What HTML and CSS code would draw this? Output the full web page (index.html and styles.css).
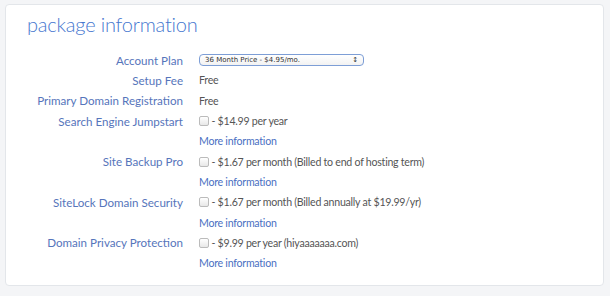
FILE: index.html
```html
<!DOCTYPE html>
<html>
<head>
    <meta charset="UTF-8">
    <title>package information</title>
    <link rel="stylesheet" href="styles.css">
</head>
<body>
<div class="panel">
    <h1>package information</h1>

    <div class="rows">
        <div class="label">Account Plan</div>
        <div class="value">
            <div class="select">
                <span>36 Month Price - $4.95/mo.</span>
                <span class="arrows">&#8597;</span>
            </div>
        </div>

        <div class="label">Setup Fee</div>
        <div class="value">Free</div>

        <div class="label">Primary Domain Registration</div>
        <div class="value">Free</div>

        <div class="label">Search Engine Jumpstart</div>
        <div class="value"><span class="box"></span> - $14.99 per year</div>
        <div class="label"></div>
        <div class="value"><a href="#">More information</a></div>

        <div class="label">Site Backup Pro</div>
        <div class="value"><span class="box"></span> - $1.67 per month (Billed to end of hosting term)</div>
        <div class="label"></div>
        <div class="value"><a href="#">More information</a></div>

        <div class="label">SiteLock Domain Security</div>
        <div class="value"><span class="box"></span> - $1.67 per month (Billed annually at $19.99/yr)</div>
        <div class="label"></div>
        <div class="value"><a href="#">More information</a></div>

        <div class="label">Domain Privacy Protection</div>
        <div class="value"><span class="box"></span> - $9.99 per year (hiyaaaaaaa.com)</div>
        <div class="label"></div>
        <div class="value"><a href="#">More information</a></div>
    </div>
</div>
</body>
</html>
```

FILE: styles.css
```css
body {
    margin: 0;
    padding: 4px 6px 9px 5px;
    background: #f4f5f7;
    font-family: Lato, "Open Sans", sans-serif;
    font-size: 12px;
}

.panel {
    background: #fff;
    border: 1px solid #e3e6ea;
    border-radius: 4px;
    height: 282px;
    box-sizing: border-box;
    padding: 7px 0 0 21px;
}

h1 {
    margin: 0 0 14px 0;
    font-weight: 300;
    font-size: 20px;
    line-height: 24px;
    letter-spacing: -0.2px;
    color: #4677cf;
}

.rows {
    display: grid;
    grid-template-columns: 156px auto;
    column-gap: 16px;
    grid-auto-rows: 20.3px;
    align-items: center;
}

.label {
    text-align: right;
    white-space: nowrap;
    color: #5675bb;
    font-size: 11.6px;
}

.value {
    color: #555;
    font-size: 10.6px;
    letter-spacing: -0.25px;
    white-space: nowrap;
}

.value a {
    color: #4a6fc2;
    text-decoration: none;
}

.select {
    width: 165px;
    height: 12px;
    box-sizing: border-box;
    border: 1px solid #7d9ed6;
    border-radius: 4px;
    display: flex;
    justify-content: space-between;
    align-items: center;
    padding: 0 5px;
    font-family: "DejaVu Sans", sans-serif;
    font-size: 7px;
    letter-spacing: 0;
    color: #333;
    background: linear-gradient(#fff, #f2f2f2);
}

.arrows {
    font-size: 7px;
}

.box {
    display: inline-block;
    width: 8px;
    height: 8px;
    border: 1px solid #bbb;
    border-radius: 2px;
    background: linear-gradient(#fff, #e8e8e8);
    vertical-align: -1px;
}
```
